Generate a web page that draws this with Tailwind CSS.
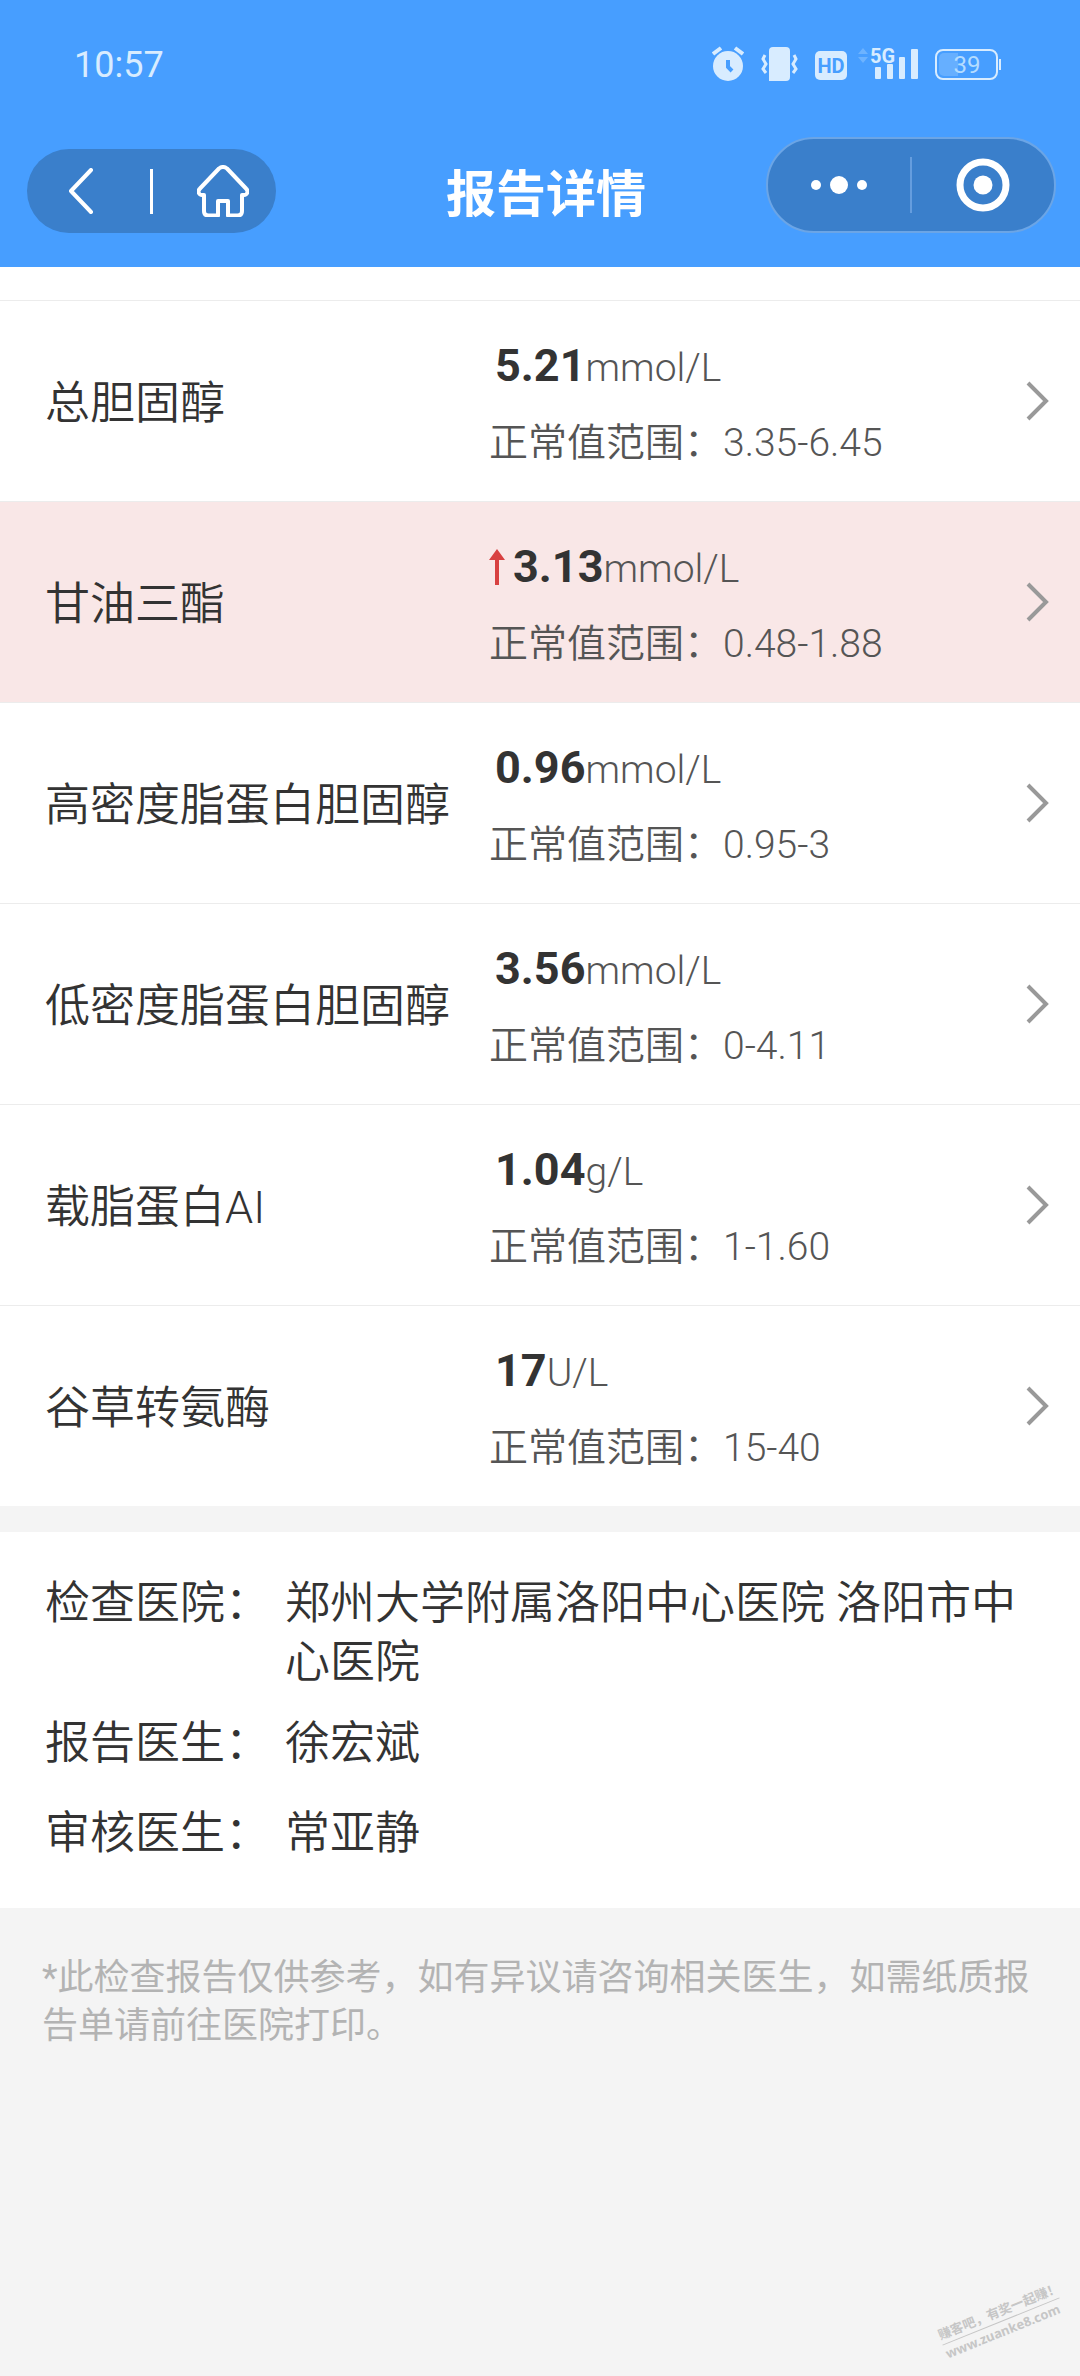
<!DOCTYPE html>
<html lang="zh-CN">
<head>
    <meta charset="UTF-8">
    <meta name="viewport" content="width=device-width, initial-scale=1.0">
    <title>报告详情</title>
    <script src="https://cdn.jsdelivr.net/npm/@tailwindcss/browser@4"></script>
    <style>
        body {
            font-family: Roboto, 'Noto Sans CJK SC', sans-serif;
        }
    </style>
</head>
<body class="relative min-h-screen bg-[#f4f4f4] text-[#333] font-[350]">
    <header class="bg-[#479eff] text-white pb-[34px]">
        <!-- Status bar -->
        <div class="flex items-center justify-between h-32 pl-[74px] pr-[78px] text-[#d8ecff] font-normal">
            <span class="pt-0.5 text-[36px]">10:57</span>
            <div class="flex items-center gap-[17px]">
                <svg class="w-8 h-9" viewBox="0 0 32 36" fill="none" aria-hidden="true">
                    <circle cx="16" cy="20" r="15" fill="#d8ecff"/>
                    <path d="M1 8l8-6M31 8l-8-6" stroke="#d8ecff" stroke-width="4"/>
                    <path d="M16 14v7l4 4" stroke="#479eff" stroke-width="4"/>
                </svg>
                <svg class="w-[37px] h-9" viewBox="0 0 37 36" fill="none" aria-hidden="true">
                    <path d="M8 5a4 4 0 0 1 4-4h13a4 4 0 0 1 4 4v26a4 4 0 0 1-4 4H8z" fill="#d8ecff"/>
                    <path d="M4 9L2 13l3 5-3 5 3 4M33 9l2 4-3 5 3 5-3 4" stroke="#d8ecff" stroke-width="3"/>
                </svg>
                <svg class="w-8 h-9" viewBox="0 0 32 36" aria-hidden="true">
                    <rect y="5" width="32" height="29" rx="5" fill="#d8ecff"/>
                    <text x="16" y="27" text-anchor="middle" font-size="20" font-weight="700" fill="#479eff">HD</text>
                </svg>
                <svg class="w-[54px] h-9 overflow-visible" viewBox="6 0 54 36" aria-hidden="true">
                    <path d="M0 8l5-6 5 6zM0 11l5 6 5-6z" fill="#6db3ff"/>
                    <text x="12" y="17" font-size="20" font-weight="700" fill="#d8ecff">5G</text>
                    <rect x="17" y="21" width="6" height="12" rx="1" fill="#d8ecff"/>
                    <rect x="29" y="18" width="6" height="15" rx="1" fill="#d8ecff"/>
                    <rect x="41" y="11" width="6" height="22" rx="1" fill="#d8ecff"/>
                    <rect x="53" y="3" width="7" height="30" rx="1" fill="#d8ecff"/>
                </svg>
                <svg class="w-[67px] h-9" viewBox="0 0 67 36" aria-hidden="true">
                    <rect x="1" y="4" width="61" height="29" rx="7" fill="none" stroke="#d8ecff" stroke-width="2"/>
                    <path d="M9 7h14v23H9a5 5 0 0 1-5-5V12a5 5 0 0 1 5-5z" fill="#66afff"/>
                    <path d="M65 13v11" stroke="#d8ecff" stroke-width="2"/>
                    <text x="32" y="27" text-anchor="middle" font-size="24" fill="#b4dcff">39</text>
                </svg>
            </div>
        </div>

        <!-- Title bar -->
        <div class="flex items-end pl-[27px] pr-6 pt-[9px]">
            <div class="flex items-center w-[249px] h-[84px] rounded-full bg-[#3a7fcb]">
                <button class="w-[123px] pl-[41px]" aria-label="返回">
                    <svg class="w-[26px] h-[46px]" viewBox="0 0 26 46" fill="none" stroke="#fff" stroke-width="4" stroke-linecap="round" stroke-linejoin="round">
                        <path d="M23 2L3 23l20 21"/>
                    </svg>
                </button>
                <span class="w-[3px] h-[45px] bg-white"></span>
                <button class="flex-1 pl-[44px]" aria-label="首页">
                    <svg class="w-[52px] h-[52px]" viewBox="0 0 52 52" fill="none" stroke="#fff" stroke-width="4" stroke-linejoin="round">
                        <path d="M22 3.500q4-3 8 0l19 20c3 3 1 6.500-2 6.500h-2v16q0 4.500-4.500 4.500H31V36H21v14.500h-9.500q-4.500 0-4.500-4.500V30H5c-3 0-5-3.500-2-6.500z"/>
                    </svg>
                </button>
            </div>
            <h1 class="flex-1 pl-[50px] text-center text-[50px] leading-[76px] font-bold">报告详情</h1>
            <div class="flex items-center w-[290px] h-24 rounded-full bg-[#3a7fcb] border-2 border-[#6ba5e6]">
                <button class="flex-1 flex justify-center" aria-label="更多">
                    <svg class="w-14 h-5" viewBox="0 0 56 20" fill="#fff">
                        <circle cx="5" cy="10" r="5"/>
                        <circle cx="28" cy="10" r="9"/>
                        <circle cx="51" cy="10" r="5"/>
                    </svg>
                </button>
                <span class="w-0.5 h-14 bg-[#659dde]"></span>
                <button class="flex-1 flex justify-center" aria-label="关闭">
                    <svg class="w-[54px] h-[54px]" viewBox="0 0 54 54" fill="none">
                        <circle cx="27" cy="27" r="23" stroke="#fff" stroke-width="7"/>
                        <circle cx="27" cy="27" r="9.500" fill="#fff"/>
                    </svg>
                </button>
            </div>
        </div>
    </header>

    <main>
        <ul id="resultList" class="bg-white pt-[33px]">
            <!-- Rows are inserted here -->
        </ul>

        <dl class="mt-[26px] bg-white px-[45px] pt-9 pb-[30px] text-[45px] leading-[59px]">
            <div class="flex items-center min-h-[90px] py-1.5">
                <div class="flex">
                    <dt class="w-60 shrink-0">检查医院：</dt>
                    <dd>郑州大学附属洛阳中心医院 洛阳市中心医院</dd>
                </div>
            </div>
            <div class="flex items-center min-h-[90px]">
                <dt class="w-60 shrink-0">报告医生：</dt>
                <dd>徐宏斌</dd>
            </div>
            <div class="flex items-center min-h-[90px]">
                <dt class="w-60 shrink-0">审核医生：</dt>
                <dd>常亚静</dd>
            </div>
        </dl>

        <p class="px-[42px] pt-[46px] text-[36px] leading-[48px] text-[#b3b3b3] font-normal">*此检查报告仅供参考，如有异议请咨询相关医生，如需纸质报告单请前往医院打印。</p>
    </main>

    <!-- Watermark -->
    <div class="absolute right-4 bottom-9 w-[126px] -rotate-22 text-[#c6c6c6] text-[13px] leading-[18px] font-bold whitespace-nowrap">
        <div class="border-b border-[#c6c6c6]">赚客吧，有奖一起赚！</div>
        <div class="font-['Noto_Sans']">www.zuanke8.com</div>
    </div>

    <script>
        const results = [
            { name: '总胆固醇', value: '5.21', unit: 'mmol/L', range: '3.35-6.45' },
            { name: '甘油三酯', value: '3.13', unit: 'mmol/L', range: '0.48-1.88', high: true },
            { name: '高密度脂蛋白胆固醇', value: '0.96', unit: 'mmol/L', range: '0.95-3' },
            { name: '低密度脂蛋白胆固醇', value: '3.56', unit: 'mmol/L', range: '0-4.11' },
            { name: '载脂蛋白AI', value: '1.04', unit: 'g/L', range: '1-1.60' },
            { name: '谷草转氨酶', value: '17', unit: 'U/L', range: '15-40' }
        ];

        const arrow = `
            <svg class="w-4 h-9 mr-2" viewBox="0 0 16 36" fill="#d84141" role="img" aria-label="偏高">
                <path d="M8 0l8 11h-6v25H6V11H0z"/>
            </svg>`;

        document.getElementById('resultList').innerHTML = results.map(item => `
            <li class="border-t border-[#ececec] ${item.high ? 'bg-[#f9e7e7]' : ''}">
                <a href="#" class="flex items-center h-[200px] pl-[45px] pr-[30px]">
                    <span class="w-[444px] pt-1.5 text-[45px]">${item.name}</span>
                    <span class="flex-1 pt-3 text-[39px] text-[#555]">
                        <span class="flex items-center h-[72px]">
                            ${item.high ? arrow : ''}
                            <span class="${item.high ? '' : 'pl-1.5'}"><b class="text-[45px] font-bold text-[#333]">${item.value}</b>${item.unit}</span>
                        </span>
                        <span class="block leading-[82px]">正常值范围：${item.range}</span>
                    </span>
                    <svg class="w-6 h-10" viewBox="0 0 24 40" fill="none" stroke="#999" stroke-width="4" aria-hidden="true">
                        <path d="M2 2l18 18L2 38"/>
                    </svg>
                </a>
            </li>`).join('');
    </script>
</body>
</html>
